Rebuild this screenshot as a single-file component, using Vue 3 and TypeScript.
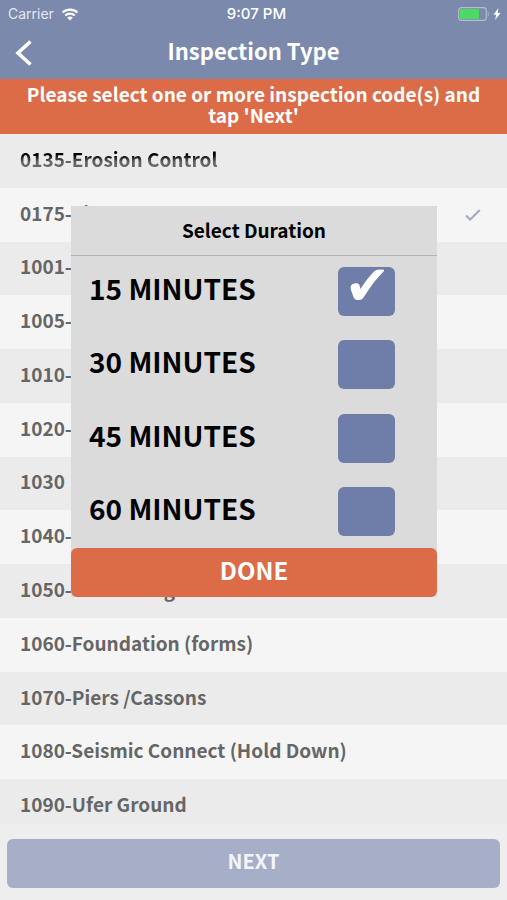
<script setup lang="ts">
import { ref } from 'vue'

interface InspectionCode {
  label: string
  selected: boolean
}

const codes = ref<InspectionCode[]>([
  { label: '0135-Erosion Control', selected: false },
  { label: '0175-Site', selected: true },
  { label: '1001-', selected: false },
  { label: '1005-', selected: false },
  { label: '1010-', selected: false },
  { label: '1020-', selected: false },
  { label: '1030', selected: false },
  { label: '1040-', selected: false },
  { label: '1050-Tie Footing', selected: false },
  { label: '1060-Foundation (forms)', selected: false },
  { label: '1070-Piers /Cassons', selected: false },
  { label: '1080-Seismic Connect (Hold Down)', selected: false },
  { label: '1090-Ufer Ground', selected: false },
])

const durations: number[] = [15, 30, 45, 60]
const duration = ref<number>(15)
</script>

<template>
  <main class="screen">
    <header class="header">
      <div class="status">
        <div class="carrier">
          <span>Carrier</span>
          <svg class="wifi" viewBox="0 0 18 13" aria-hidden="true">
            <path d="M1.5 4.6a11 11 0 0 1 15 0M4.2 7.5a7 7 0 0 1 9.6 0" fill="none" stroke="#fff" stroke-width="2.1" />
            <path d="M9 12.6 6.2 9.7a4.1 4.1 0 0 1 5.6 0z" fill="#fff" />
          </svg>
        </div>
        <time class="clock">9:07 PM</time>
        <div class="power">
          <svg class="battery" viewBox="0 0 32 14" aria-hidden="true">
            <rect x=".7" y=".7" width="27.6" height="12.6" rx="2.8" fill="none" stroke="#b5bccf" stroke-width="1.2" />
            <rect x="2" y="2" width="19" height="10" rx="1.2" fill="#4cd964" />
            <path d="M29.8 4.6q2 2.4 0 4.8z" fill="#b5bccf" />
          </svg>
          <svg class="bolt" viewBox="0 0 8 12" aria-hidden="true">
            <path d="M5.4 0 .4 6.7h2.8L2.2 12l5.4-7H4.7z" fill="#fff" />
          </svg>
        </div>
      </div>
      <div class="nav">
        <button class="back" type="button" aria-label="Back">
          <svg viewBox="0 0 18 28" aria-hidden="true">
            <path d="M15.5 2.5 3 14l12.5 11.5" fill="none" stroke="#fff" stroke-width="3.6" />
          </svg>
        </button>
        <h1>Inspection Type</h1>
      </div>
    </header>

    <p class="notice">Please select one or more inspection code(s) and tap 'Next'</p>

    <ul class="codes">
      <li v-for="code in codes" :key="code.label">
        <span class="code">{{ code.label }}</span>
        <svg v-if="code.selected" class="tick" viewBox="0 0 16 12" aria-hidden="true">
          <path d="M1 6.5 5.2 10.6 14.8 1" fill="none" stroke="#a3a9c9" stroke-width="2.1" />
        </svg>
      </li>
    </ul>

    <footer class="footer">
      <button class="next" type="button">NEXT</button>
    </footer>

    <section class="dialog" role="dialog" aria-labelledby="dialog-title">
      <h2 id="dialog-title">Select Duration</h2>
      <div class="options">
        <label v-for="minutes in durations" :key="minutes" class="option">
          <span class="minutes">{{ minutes }} MINUTES</span>
          <span class="box">
            <input v-model="duration" type="radio" name="duration" :value="minutes" />
            <svg v-if="duration === minutes" viewBox="0 0 34 32" aria-hidden="true">
              <path d="M.6 17.5C1.8 14.2 8.2 13 9.5 16.2L10.4 20C15.5 12.5 20.5 5.5 25 1.7Q27 .2 34 .7C35 1 34.3 1.8 33.3 2.8C26.5 9.5 19.8 18.5 13.5 28.5Q12 31.3 7.5 31Q4.4 31 3.5 28C2.4 24.5 .2 20.5 .6 17.5Z" fill="#fff" />
            </svg>
          </span>
        </label>
      </div>
      <button class="done" type="button">DONE</button>
    </section>
  </main>
</template>

<style>
body {
  margin: 0;
}
</style>

<style scoped>
.screen {
  position: relative;
  display: flex;
  flex-direction: column;
  min-height: 100vh;
  background: #eeeeef;
  color: #666;
  font-family: "Noto Sans CJK SC", "Open Sans", sans-serif;
  font-weight: 700;
}

h1,
h2,
p,
ul {
  margin: 0;
  padding: 0;
}

button {
  border: 0;
  padding: 0;
  color: #fff;
  font: inherit;
}

.header {
  background: #7a89ac;
  color: #fff;
}

.status {
  display: grid;
  grid-template-columns: 1fr auto 1fr;
  align-items: center;
  height: 28px;
  padding: 0 6px 0 8px;
  font: 400 14px/28px Inter, sans-serif;
}

.carrier,
.power {
  display: flex;
  align-items: center;
  gap: 7px;
  color: #e4e8f0;
}

.power {
  justify-content: flex-end;
  gap: 3px;
}

.clock {
  padding-left: 4px;
  font-size: 15px;
  font-weight: 500;
}

.wifi {
  width: 18px;
  height: 13px;
}

.battery {
  width: 32px;
  height: 14px;
}

.bolt {
  width: 8px;
  height: 12px;
}

.nav {
  display: grid;
  grid-template-columns: 48px 1fr 48px;
  align-items: start;
  height: 51px;
}

.back {
  display: flex;
  align-items: center;
  justify-content: center;
  height: 49px;
  background: none;
}

.back svg {
  width: 18px;
  height: 28px;
}

h1 {
  font-size: 22px;
  line-height: 44px;
  text-align: center;
}

.notice {
  padding: 4px 24px 9px;
  background: #dc6c48;
  color: #fff;
  font-size: 19px;
  line-height: 21px;
  text-align: center;
}

.codes {
  display: flex;
  flex: 1;
  flex-direction: column;
  list-style: none;
}

.codes li {
  display: flex;
  flex: 1;
  align-items: center;
  justify-content: space-between;
  padding: 0 26px 0 20px;
  background: #f5f5f5;
  font-size: 19px;
  line-height: 24px;
}

.codes li:nth-child(odd) {
  background: #ebebeb;
}

.code {
  padding-bottom: 4px;
}

.codes li:first-child .code {
  background: linear-gradient(#000 8px, #666 15px);
  background-clip: text;
  color: transparent;
}

.tick {
  width: 16px;
  height: 12px;
}

.footer {
  margin-top: -9px;
  padding: 15px 7px 12px;
  background: #eeeeef;
}

.next,
.done {
  display: block;
  width: 100%;
  height: 49px;
  padding-bottom: 7px;
  border-radius: 6px;
}

.next {
  background: #a6aec8;
  color: #f3f5fa;
  font-size: 20px;
}

.dialog {
  position: absolute;
  top: 206px;
  right: 70px;
  left: 71px;
  background: #dbdbdb;
  color: #000;
}

h2 {
  height: 49px;
  border-bottom: 1px solid #b2b2b2;
  font-size: 19px;
  line-height: 47px;
  text-align: center;
}

.options {
  display: flex;
  flex-direction: column;
  justify-content: space-between;
  box-sizing: border-box;
  min-height: 292px;
  padding: 11px 42px 12px 18px;
}

.option {
  display: flex;
  align-items: center;
  justify-content: space-between;
  font-size: 28px;
}

.minutes {
  padding-bottom: 7px;
  line-height: 42px;
}

.box {
  display: grid;
}

.box input {
  grid-area: 1 / 1;
  width: 57px;
  height: 49px;
  margin: 0;
  border-radius: 6px;
  background: #6f7ea9;
  appearance: none;
}

.box svg {
  z-index: 1;
  grid-area: 1 / 1;
  width: 34px;
  height: 32px;
  margin: 2px 0 0 12px;
  pointer-events: none;
}

.done {
  background: #dc6c48;
  font-size: 24px;
}
</style>
